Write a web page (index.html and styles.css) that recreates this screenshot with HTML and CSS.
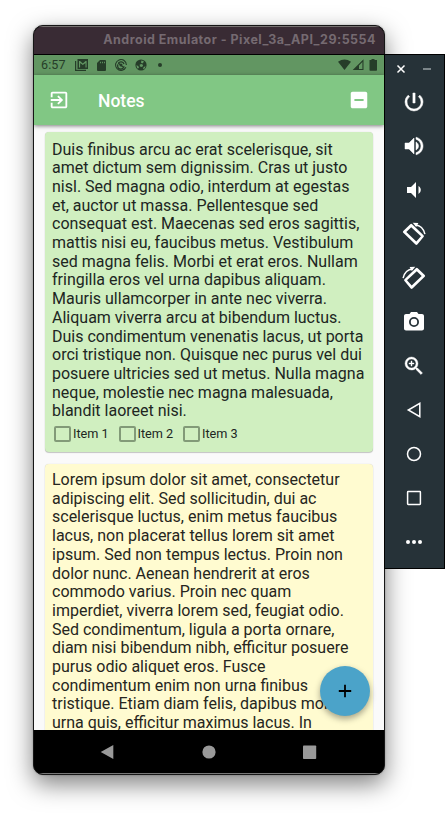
FILE: index.html
```html
<!DOCTYPE html>
<html lang="en">
<head>
<meta charset="utf-8">
<title>Notes</title>
<link rel="stylesheet" href="styles.css">
</head>
<body>
<div class="desktop">
  <main class="phone">
    <div class="titlebar">Android Emulator - Pixel_3a_API_29:5554</div>
    <div class="statusbar">
      <span class="clock">6:57</span>
      <svg class="st-mail" viewBox="0 0 14 12"><path d="M.6 2v9.300H11" fill="none" stroke="currentColor" stroke-width="1.200"/><path fill-rule="evenodd" d="M2.500 0H13v10H2.500zM4 2v6.500h1.100V4.100l2.700 2 2.700-2v4.400h1.100V2h-1L7.800 4.400 5 2z" fill="currentColor"/></svg>
      <svg class="st-sd" viewBox="0 0 9 11"><path fill-rule="evenodd" d="M3 0h5q1 0 1 1v9q0 1-1 1H1q-1 0-1-1V3zM3 1.700v1.600h.9V1.700zm2 0v1.600h.9V1.700zm2 0v1.600h.9V1.700z" fill="currentColor"/></svg>
      <svg class="st-at" viewBox="0 0 12 12"><g fill="none" stroke="currentColor"><path d="M10.900 8.200A5.400 5.400 0 1 1 11.400 6M9.800 9.800A5.400 5.400 0 0 1 4 11" stroke-width="1.100"/><path d="M3.400 4.100A3.200 3.200 0 0 1 9 5M9 7.200A3.200 3.200 0 1 1 3 5.400" stroke-width="1.300"/><path d="M3.200 4l5.600 4.600" stroke-width="1.200"/></g><circle cx="6" cy="6" r="1.500" fill="currentColor"/></svg>
      <svg class="st-ball" viewBox="0 0 12 12"><circle cx="6" cy="6" r="5.600" fill="currentColor"/><path d="M6.300 1.500l2.600.8-1 2-1.800-.2zM4.700 5.600l2.400-.5 1 1.500-1 1.500-2.200-.5zM1.300 6.200l2 .8.700 2-1.600.6zM8.500 8.300l2-1.200-.8 2.400-1.700.8z" fill="#629662"/></svg>
      <i class="st-dot"></i>
      <svg class="st-signal" viewBox="0 0 39 12"><path d="M0 2.800Q6.500-2 13 2.800L6.500 11z" fill="currentColor"/><path fill-rule="evenodd" d="M25.500.3V11H14.700zM24.400 3L21 6.500V10h3.400z" fill="currentColor"/><path d="M33.500 0h3v1.100H39V11q0 .7-.7.7h-6.100q-.7 0-.7-.7V1.100h2z" fill="currentColor"/></svg>
    </div>
    <header class="appbar">
      <svg class="exit" viewBox="0 0 24 24"><path d="M10.090 15.590L11.500 17l5-5-5-5-1.410 1.410L12.670 11H3v2h9.670l-2.580 2.590zM19 3H5c-1.110 0-2 .9-2 2v4h2V5h14v14H5v-4H3v4c0 1.100.89 2 2 2h14c1.100 0 2-.9 2-2V5c0-1.100-.9-2-2-2z"/></svg>
      <h1>Notes</h1>
      <svg class="minus" viewBox="0 0 24 24"><path d="M19 3H5c-1.110 0-2 .9-2 2v14c0 1.100.89 2 2 2h14c1.100 0 2-.9 2-2V5c0-1.100-.9-2-2-2zm-2 10H7v-2h10v2z"/></svg>
    </header>
    <section class="notes">
      <article class="card green">
        <p>Duis finibus arcu ac erat scelerisque, sit<br>amet dictum sem dignissim. Cras ut justo<br>nisl. Sed magna odio, interdum at egestas<br>et, auctor ut massa. Pellentesque sed<br>consequat est. Maecenas sed eros sagittis,<br>mattis nisi eu, faucibus metus. Vestibulum<br>sed magna felis. Morbi et erat eros. Nullam<br>fringilla eros vel urna dapibus aliquam.<br>Mauris ullamcorper in ante nec viverra.<br>Aliquam viverra arcu at bibendum luctus.<br>Duis condimentum venenatis lacus, ut porta<br>orci tristique non. Quisque nec purus vel dui<br>posuere ultricies sed ut metus. Nulla magna<br>neque, molestie nec magna malesuada,<br>blandit laoreet nisi.</p>
        <div class="checks">
          <span class="check"><i></i>Item 1</span>
          <span class="check"><i></i>Item 2</span>
          <span class="check"><i></i>Item 3</span>
        </div>
      </article>
      <article class="card yellow">
        <p>Lorem ipsum dolor sit amet, consectetur<br>adipiscing elit. Sed sollicitudin, dui ac<br>scelerisque luctus, enim metus faucibus<br>lacus, non placerat tellus lorem sit amet<br>ipsum. Sed non tempus lectus. Proin non<br>dolor nunc. Aenean hendrerit at eros<br>commodo varius. Proin nec quam<br>imperdiet, viverra lorem sed, feugiat odio.<br>Sed condimentum, ligula a porta ornare,<br>diam nisi bibendum nibh, efficitur posuere<br>purus odio aliquet eros. Fusce<br>condimentum enim non urna finibus<br>tristique. Etiam diam felis, dapibus mollis<br>urna quis, efficitur maximus lacus. In</p>
      </article>
      <button class="fab" aria-label="Add note"><svg viewBox="0 0 14 14"><path d="M7 .8v12.400M.8 7h12.400" stroke="#000" stroke-width="1.800"/></svg></button>
    </section>
    <nav class="navbar">
      <svg viewBox="0 0 14 16"><path d="M13.300.9v14.200L.7 8z"/></svg>
      <svg viewBox="0 0 14 16"><circle cx="7" cy="8" r="6.600"/></svg>
      <svg viewBox="0 0 14 16"><rect x="0" y="1.500" width="13.200" height="13.500" rx=".8"/></svg>
    </nav>
  </main>
  <aside class="tools">
    <div class="winctl">
      <svg viewBox="0 0 36 10"><path d="M1.500 1.500l7 7m0-7l-7 7" stroke="#fff" stroke-width="1.500"/><path d="M27 5h8" stroke="#929a9e" stroke-width="1.600"/></svg>
    </div>
    <svg viewBox="0 0 24 24"><path d="M13.100 3h-2.200v10h2.200V3zm4.730 2.170l-1.420 1.420A6.920 6.920 0 0 1 19 12c0 3.870-3.130 7-7 7A6.995 6.995 0 0 1 7.580 6.580L6.170 5.170A8.932 8.932 0 0 0 3 12a9 9 0 0 0 18 0c0-2.740-1.230-5.180-3.170-6.830z" stroke="#fff" stroke-width=".5"/></svg>
    <svg viewBox="0 0 24 24"><path d="M3 9v6h4l5 5V4L7 9H3zm13.500 3c0-1.770-1.020-3.290-2.500-4.030v8.050c1.480-.73 2.500-2.250 2.500-4.020zM14 3.230v2.060c2.890.86 5 3.540 5 6.710s-2.110 5.850-5 6.710v2.060c4.010-.91 7-4.490 7-8.770s-2.990-7.860-7-8.770z" stroke="#fff" stroke-width=".5"/></svg>
    <svg viewBox="0 0 24 24"><path d="M5 9v6h4l5 5V4L9 9H5zm11.500-1.030v8.050A4.500 4.500 0 0 0 18.800 12c0-1.770-.82-3.290-2.300-4.030z"/></svg>
    <svg class="rot" viewBox="0 0 24 24"><g id="rotate"><path fill-rule="evenodd" d="M8.300 2.300q.9-.9 1.800 0L21.500 13.200q.9.900 0 1.800L15.300 22.500q-.9.900-1.800 0L1.300 10.800q-.9-.9 0-1.800zM9.200 5.200L4.300 9.900l10 9.700 4.700-5.400z"/><path d="M13.200 2.900q7.700.4 9.700 9.200" fill="none" stroke="#fff" stroke-width="1.500"/><path d="M10.700.7l5.700.2-2.200 4.200z"/></g></svg>
    <svg class="rot mirrored" viewBox="0 0 24 24"><use href="#rotate"/></svg>
    <svg viewBox="0 0 24 24"><path fill-rule="evenodd" d="M9 2L7.500 4H4c-1.100 0-2 .9-2 2v12.500c0 1.100.9 2 2 2h16c1.100 0 2-.9 2-2V6c0-1.100-.9-2-2-2h-3.500L15 2H9zm3 5a5 5 0 1 0 0 10 5 5 0 0 0 0-10zm0 1.800a3.200 3.200 0 1 1 0 6.400 3.200 3.200 0 0 1 0-6.400z"/></svg>
    <svg viewBox="0 0 24 24"><path d="M15.500 14h-.79l-.28-.27A6.471 6.471 0 0 0 16 9.500 6.500 6.500 0 1 0 9.500 16c1.610 0 3.090-.59 4.230-1.570l.27.28v.79l5 4.990L20.490 19l-4.990-5zm-6 0C7.010 14 5 11.990 5 9.500S7.010 5 9.500 5 14 7.010 14 9.500 11.990 14 9.500 14zm2.500-4h-2v2H9v-2H7V9h2V7h1v2h2v1z" stroke="#fff" stroke-width=".4"/></svg>
    <svg class="line" viewBox="0 0 20 20"><path d="M15.800 3.300v13.400L4.300 10z"/></svg>
    <svg class="line" viewBox="0 0 20 20"><circle cx="10" cy="10" r="6.500"/></svg>
    <svg class="line" viewBox="0 0 20 20"><rect x="3.600" y="3.600" width="12.800" height="12.800" rx=".6"/></svg>
    <svg class="dots" viewBox="0 0 20 20"><circle cx="4" cy="10" r="2"/><circle cx="10" cy="10" r="2"/><circle cx="16" cy="10" r="2"/></svg>
  </aside>
</div>
</body>
</html>
```
FILE: styles.css
```css
* { box-sizing: border-box; }
body { margin: 0; background: #fff; font-family: Roboto, "Liberation Sans", sans-serif; overflow: hidden; }
svg { display: block; flex: none; fill: #fff; }
.desktop { width: 445px; height: 816px; padding: 25px 0 0 33px; display: flex; align-items: flex-start; overflow: hidden; }
.phone { width: 352px; height: 750px; flex: none; border: 1px solid #161616; border-radius: 10px; background: #000; overflow: hidden; display: flex; flex-direction: column; box-shadow: 0 9px 25px rgba(0,0,0,.5), 0 0 2px rgba(0,0,0,.3); }
.titlebar { height: 29px; flex: none; border-top: 1px solid #75706f; border-bottom: 1px solid #000; background: #392b34; color: #756a71; font: 700 12.5px/26px Inter, sans-serif; text-align: right; padding-right: 8px; white-space: nowrap; letter-spacing: .48px; }
.statusbar { height: 20px; flex: none; background: #629662; color: #263d29; display: flex; align-items: center; padding-left: 7px; }
.clock { width: 34px; font-size: 12.500px; line-height: 20px; letter-spacing: .1px; }
.st-mail { width: 14px; height: 12px; }
.st-sd { width: 9px; height: 11px; margin-left: 8px; }
.st-at { width: 12px; height: 12px; margin-left: 9px; }
.st-ball { width: 12px; height: 12px; margin-left: 8px; }
.st-dot { width: 4px; height: 4px; border-radius: 50%; background: currentColor; margin-left: 11px; }
.st-signal { width: 39px; height: 12px; margin: 0 7px 0 auto; }
.appbar { height: 50px; flex: none; background: #81c784; display: flex; align-items: center; padding: 0 14px; position: relative; z-index: 1; box-shadow: 0 1px 4px rgba(0,0,0,.5); }
.appbar svg { width: 22px; height: 22px; }
.appbar h1 { margin: 2px auto 0 28px; color: #fff; font-size: 17.500px; font-weight: 500; line-height: 22px; }
.notes { height: 605px; flex: none; background: #fafafa; padding: 7px 11px 0; overflow: hidden; position: relative; }
.card { border-radius: 4px; padding: 8.500px 7px 0; box-shadow: 0 1px 1px rgba(0,0,0,.2), 0 0 1px rgba(0,0,0,.2); color: #20261f; }
.card p { margin: 0; white-space: nowrap; font-size: 16px; line-height: 18.700px; }
.green { height: 320px; background: #d0efc0; margin-bottom: 12px; }
.yellow { height: 320px; background: #fffbd0; color: #262620; padding-top: 7px; }
.checks { display: flex; gap: 9px; padding: 4px 0 0 2px; }
.check { display: flex; align-items: center; gap: 2px; width: 55.500px; font-size: 12.700px; line-height: 18px; white-space: nowrap; }
.check i { width: 17px; height: 16px; flex: none; border: 2px solid #829a78; border-radius: 2px; }
.fab { position: absolute; right: 14px; bottom: 14px; width: 50px; height: 50px; padding: 0; border: 0; border-radius: 50%; background: #4ba3c9; display: grid; place-items: center; box-shadow: 0 3px 6px rgba(0,0,0,.35); }
.fab svg { width: 14px; height: 14px; }
.navbar { height: 44px; flex: none; background: #000; border-bottom: 1px solid #777; display: flex; justify-content: space-between; align-items: center; padding: 0 67px 0 66px; }
.navbar svg { width: 14px; height: 16px; fill: #999; }
.tools { position: relative; width: 61px; height: 515px; flex: none; margin: 29px 0 0 -1px; background: #263238; border: 1px solid #000; display: flex; flex-direction: column; align-items: center; gap: 20px; padding-right: 1px; }
.tools > svg { width: 24px; height: 24px; }
.winctl { height: 19px; display: flex; align-items: flex-end; margin-bottom: -4px; padding-top: 9px; }
.winctl svg { width: 36px; height: 10px; }
.mirrored { transform: scaleX(-1); }
.tools > .line, .tools > .dots { width: 20px; height: 20px; margin: 2px 0; }
.line { fill: none; stroke: #fff; stroke-width: 1.500; }
```
